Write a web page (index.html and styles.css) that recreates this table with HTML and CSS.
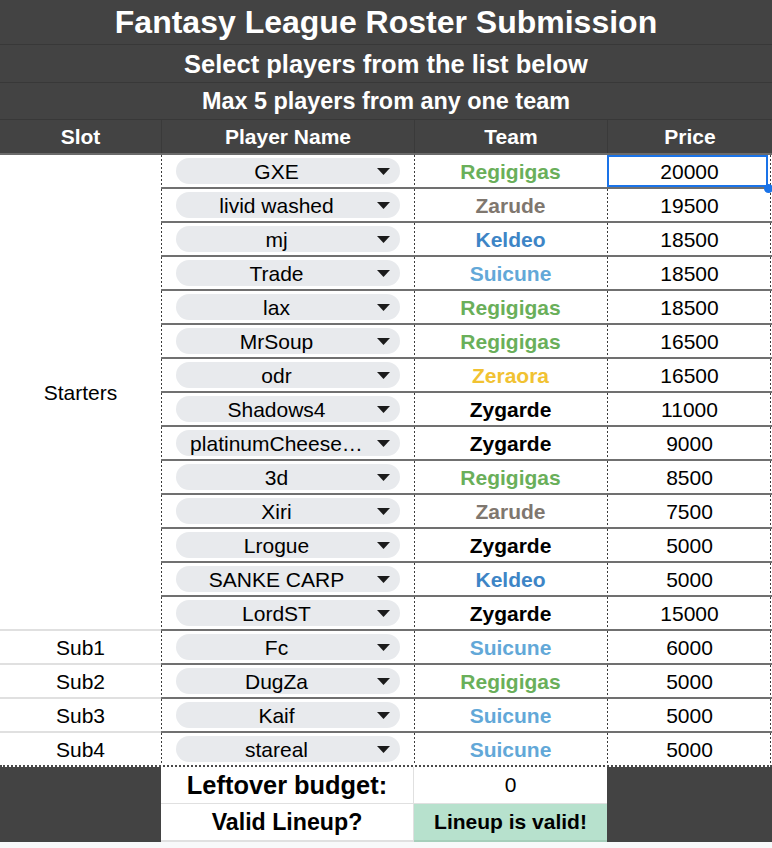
FILE: index.html
```html
<!DOCTYPE html>
<html lang="en">
<head>
<meta charset="utf-8">
<title>Fantasy League Roster Submission</title>
<link rel="stylesheet" href="styles.css">
</head>
<body>
<div class="sheet">
  <div class="banner banner-title">Fantasy League Roster Submission</div>
  <div class="banner banner-sub">Select players from the list below</div>
  <div class="banner banner-note">Max 5 players from any one team</div>

  <div class="cols head">
    <div class="hcell">Slot</div>
    <div class="hcell">Player Name</div>
    <div class="hcell">Team</div>
    <div class="hcell">Price</div>
  </div>

  <div class="cols roster">
    <div class="slot slot-starters">Starters</div>

    <div class="cell pick"><span class="chip"><span class="chip-text">GXE</span><svg class="caret" viewBox="0 0 13 7"><polygon points="0,0 13,0 6.5,7"/></svg></span></div>
    <div class="cell team t-regi">Regigigas</div>
    <div class="cell price selected">20000<span class="sel-box"></span><span class="sel-handle"></span></div>

    <div class="cell pick"><span class="chip"><span class="chip-text">livid washed</span><svg class="caret" viewBox="0 0 13 7"><polygon points="0,0 13,0 6.5,7"/></svg></span></div>
    <div class="cell team t-zaru">Zarude</div>
    <div class="cell price">19500</div>

    <div class="cell pick"><span class="chip"><span class="chip-text">mj</span><svg class="caret" viewBox="0 0 13 7"><polygon points="0,0 13,0 6.5,7"/></svg></span></div>
    <div class="cell team t-keld">Keldeo</div>
    <div class="cell price">18500</div>

    <div class="cell pick"><span class="chip"><span class="chip-text">Trade</span><svg class="caret" viewBox="0 0 13 7"><polygon points="0,0 13,0 6.5,7"/></svg></span></div>
    <div class="cell team t-suic">Suicune</div>
    <div class="cell price">18500</div>

    <div class="cell pick"><span class="chip"><span class="chip-text">lax</span><svg class="caret" viewBox="0 0 13 7"><polygon points="0,0 13,0 6.5,7"/></svg></span></div>
    <div class="cell team t-regi">Regigigas</div>
    <div class="cell price">18500</div>

    <div class="cell pick"><span class="chip"><span class="chip-text">MrSoup</span><svg class="caret" viewBox="0 0 13 7"><polygon points="0,0 13,0 6.5,7"/></svg></span></div>
    <div class="cell team t-regi">Regigigas</div>
    <div class="cell price">16500</div>

    <div class="cell pick"><span class="chip"><span class="chip-text">odr</span><svg class="caret" viewBox="0 0 13 7"><polygon points="0,0 13,0 6.5,7"/></svg></span></div>
    <div class="cell team t-zera">Zeraora</div>
    <div class="cell price">16500</div>

    <div class="cell pick"><span class="chip"><span class="chip-text">Shadows4</span><svg class="caret" viewBox="0 0 13 7"><polygon points="0,0 13,0 6.5,7"/></svg></span></div>
    <div class="cell team t-zyga">Zygarde</div>
    <div class="cell price">11000</div>

    <div class="cell pick"><span class="chip"><span class="chip-text">platinumCheese…</span><svg class="caret" viewBox="0 0 13 7"><polygon points="0,0 13,0 6.5,7"/></svg></span></div>
    <div class="cell team t-zyga">Zygarde</div>
    <div class="cell price">9000</div>

    <div class="cell pick"><span class="chip"><span class="chip-text">3d</span><svg class="caret" viewBox="0 0 13 7"><polygon points="0,0 13,0 6.5,7"/></svg></span></div>
    <div class="cell team t-regi">Regigigas</div>
    <div class="cell price">8500</div>

    <div class="cell pick"><span class="chip"><span class="chip-text">Xiri</span><svg class="caret" viewBox="0 0 13 7"><polygon points="0,0 13,0 6.5,7"/></svg></span></div>
    <div class="cell team t-zaru">Zarude</div>
    <div class="cell price">7500</div>

    <div class="cell pick"><span class="chip"><span class="chip-text">Lrogue</span><svg class="caret" viewBox="0 0 13 7"><polygon points="0,0 13,0 6.5,7"/></svg></span></div>
    <div class="cell team t-zyga">Zygarde</div>
    <div class="cell price">5000</div>

    <div class="cell pick"><span class="chip"><span class="chip-text">SANKE CARP</span><svg class="caret" viewBox="0 0 13 7"><polygon points="0,0 13,0 6.5,7"/></svg></span></div>
    <div class="cell team t-keld">Keldeo</div>
    <div class="cell price">5000</div>

    <div class="cell pick"><span class="chip"><span class="chip-text">LordST</span><svg class="caret" viewBox="0 0 13 7"><polygon points="0,0 13,0 6.5,7"/></svg></span></div>
    <div class="cell team t-zyga">Zygarde</div>
    <div class="cell price">15000</div>

    <div class="slot">Sub1</div>
    <div class="cell pick"><span class="chip"><span class="chip-text">Fc</span><svg class="caret" viewBox="0 0 13 7"><polygon points="0,0 13,0 6.5,7"/></svg></span></div>
    <div class="cell team t-suic">Suicune</div>
    <div class="cell price">6000</div>

    <div class="slot">Sub2</div>
    <div class="cell pick"><span class="chip"><span class="chip-text">DugZa</span><svg class="caret" viewBox="0 0 13 7"><polygon points="0,0 13,0 6.5,7"/></svg></span></div>
    <div class="cell team t-regi">Regigigas</div>
    <div class="cell price">5000</div>

    <div class="slot">Sub3</div>
    <div class="cell pick"><span class="chip"><span class="chip-text">Kaif</span><svg class="caret" viewBox="0 0 13 7"><polygon points="0,0 13,0 6.5,7"/></svg></span></div>
    <div class="cell team t-suic">Suicune</div>
    <div class="cell price">5000</div>

    <div class="slot end">Sub4</div>
    <div class="cell pick end"><span class="chip"><span class="chip-text">stareal</span><svg class="caret" viewBox="0 0 13 7"><polygon points="0,0 13,0 6.5,7"/></svg></span></div>
    <div class="cell team t-suic end">Suicune</div>
    <div class="cell price end">5000</div>
  </div>

  <div class="cols summary">
    <div class="dark dark-left"></div>
    <div class="sum-label sum-budget">Leftover budget:</div>
    <div class="sum-value">0</div>
    <div class="dark dark-right"></div>
    <div class="sum-label sum-valid">Valid Lineup?</div>
    <div class="sum-value sum-ok">Lineup is valid!</div>
  </div>
</div>
</body>
</html>
```

FILE: styles.css
```css
* { box-sizing: border-box; }

html, body {
  margin: 0;
  padding: 0;
  background: #f8f9fa;
}

body {
  font-family: "Liberation Sans", Arial, sans-serif;
  color: #000;
  width: 772px;
  height: 848px;
  overflow: hidden;
}

.sheet {
  width: 772px;
  background: #ffffff;
}

.banner {
  background: #434343;
  color: #ffffff;
  font-weight: bold;
  display: flex;
  align-items: center;
  justify-content: center;
  border-bottom: 1px solid #383838;
  white-space: nowrap;
}

.banner-title {
  height: 45px;
  font-size: 32px;
}

.banner-sub {
  height: 38px;
  font-size: 25.5px;
  padding-top: 2px;
}

.banner-note {
  height: 37px;
  font-size: 23.4px;
  padding-top: 1px;
}

.cols {
  display: grid;
  grid-template-columns: 161px 253px 193px 165px;
}

.head {
  background: #434343;
  height: 35px;
  border-bottom: 2px solid #6b6b6b;
}

.hcell {
  color: #ffffff;
  font-weight: bold;
  font-size: 21px;
  display: flex;
  align-items: center;
  justify-content: center;
  padding-top: 1px;
}

.hcell + .hcell {
  border-left: 1px solid #3a3a3a;
}

.roster {
  grid-template-rows: repeat(17, 34px) 32px;
}

.slot {
  display: flex;
  align-items: center;
  justify-content: center;
  font-size: 21px;
  padding-top: 1px;
  border-bottom: 2px solid #e0e0e0;
}

.slot-starters {
  grid-column: 1;
  grid-row: 1 / span 14;
}

.cell {
  position: relative;
  display: flex;
  align-items: center;
  justify-content: center;
  font-size: 21px;
  padding-top: 1px;
  border-bottom: 2px solid #707070;
  background-image: linear-gradient(to bottom, #3c3c3c 50%, transparent 50%);
  background-size: 1px 4px;
  background-repeat: repeat-y;
  background-position: left top;
}

.price {
  background-image:
    linear-gradient(to bottom, #3c3c3c 50%, transparent 50%),
    linear-gradient(to bottom, #3c3c3c 50%, transparent 50%);
  background-size: 1px 4px, 1px 4px;
  background-repeat: repeat-y, repeat-y;
  background-position: left top, 163px top;
}

.end {
  border-bottom: none;
}

.pick {
  justify-content: flex-start;
  padding-left: 15px;
  padding-top: 0;
}

.chip {
  width: 224px;
  height: 26px;
  border-radius: 13px;
  background: #e8eaed;
  display: flex;
  align-items: center;
}

.chip-text {
  flex: 1;
  min-width: 0;
  padding: 0 10px;
  text-align: center;
  white-space: nowrap;
  overflow: hidden;
  font-size: 21px;
  line-height: 26px;
  padding-top: 1px;
}

.caret {
  width: 13px;
  height: 7px;
  margin-right: 10px;
  margin-top: 1px;
  fill: #1b1b1b;
  flex: none;
}

.team {
  font-weight: bold;
}

.t-regi { color: #6aaf5a; }
.t-zaru { color: #7f776f; }
.t-keld { color: #3d85c6; }
.t-suic { color: #62a8d8; }
.t-zera { color: #f1c232; }
.t-zyga { color: #000000; }

.sel-box {
  position: absolute;
  left: 0;
  top: 0;
  right: 4px;
  bottom: 0;
  border: 2px solid #1a73e8;
  pointer-events: none;
}

.sel-handle {
  position: absolute;
  right: -1px;
  bottom: -6px;
  width: 9px;
  height: 9px;
  border-radius: 50%;
  background: #1a73e8;
  z-index: 2;
}

.summary {
  grid-template-rows: 37px 38px;
  border-top: 2px dotted #4a4a4a;
}

.dark {
  background: #434343;
  grid-row: 1 / span 2;
}

.dark-left { grid-column: 1; }
.dark-right { grid-column: 4; }

.sum-label {
  grid-column: 2;
  display: flex;
  align-items: center;
  justify-content: center;
  font-weight: bold;
  border-right: 1px solid #e0e0e0;
}

.sum-budget {
  font-size: 25.4px;
  border-bottom: 1px solid #e0e0e0;
}

.sum-valid {
  font-size: 23.2px;
  border-bottom: 2px solid #e0e0e0;
}

.sum-value {
  grid-column: 3;
  display: flex;
  align-items: center;
  justify-content: center;
  font-size: 21px;
  border-bottom: 1px solid #e0e0e0;
}

.sum-ok {
  background: #b7e1cd;
  font-weight: bold;
  border-bottom: 2px solid #a6cfbb;
}
```
